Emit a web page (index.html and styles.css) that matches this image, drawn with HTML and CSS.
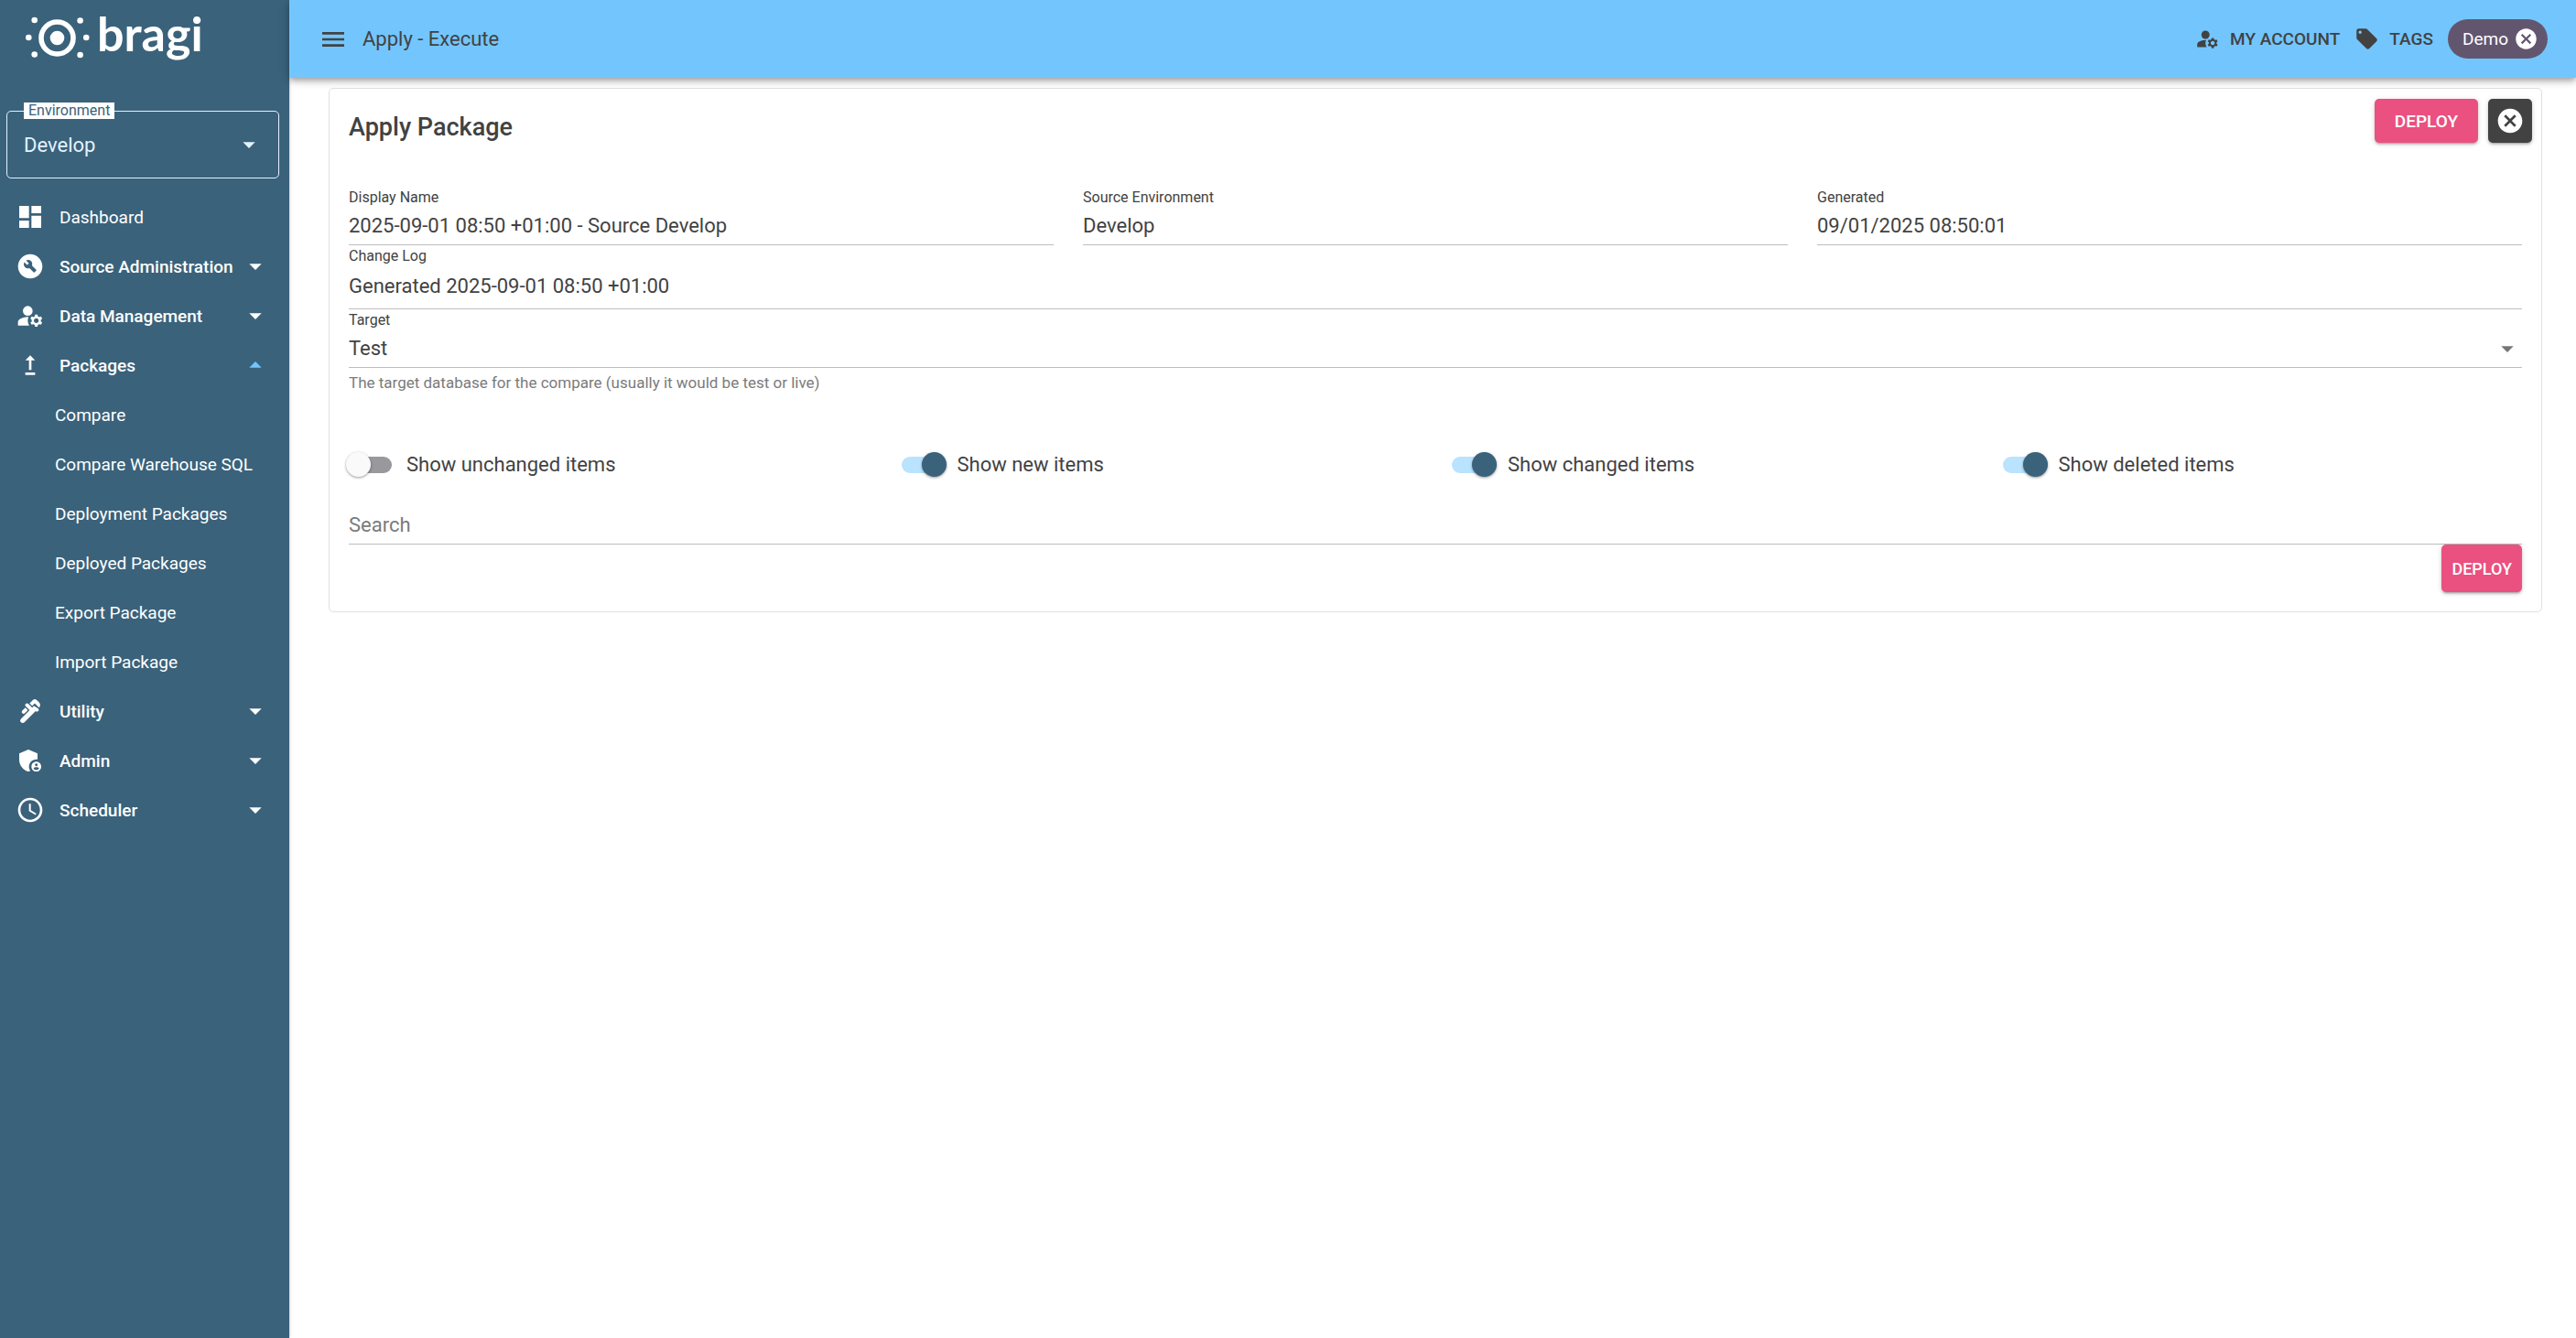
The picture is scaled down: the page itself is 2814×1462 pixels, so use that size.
FILE: index.html
```html
<!DOCTYPE html>
<html lang="en">
<head>
    <meta charset="UTF-8">
    <meta name="viewport" content="width=device-width, initial-scale=1.0">
    <title>Apply - Execute</title>
    <link rel="stylesheet" href="styles.css">
</head>
<body>

<!-- shared icons -->
<svg class="sprite" aria-hidden="true">
    <symbol id="arrow-down" viewBox="0 0 24 24"><path d="M7 10l5 5 5-5z"/></symbol>
    <symbol id="arrow-up" viewBox="0 0 24 24"><path d="M7 14l5-5 5 5z"/></symbol>
    <symbol id="cancel" viewBox="0 0 24 24"><path d="M12 2C6.47 2 2 6.47 2 12s4.47 10 10 10 10-4.47 10-10S17.53 2 12 2zm5 13.59L15.59 17 12 13.41 8.41 17 7 15.59 10.59 12 7 8.41 8.41 7 12 10.59 15.59 7 17 8.41 13.41 12 17 15.59z"/></symbol>
    <symbol id="manage" viewBox="0 0 24 24">
        <circle cx="10" cy="8" r="4"/>
        <path d="M10.67,13.02C10.45,13.01,10.23,13,10,13c-2.42,0-4.68,0.67-6.61,1.82C2.51,15.34,2,16.32,2,17.35V20h9.26C10.47,18.87,10,17.49,10,16C10,14.93,10.25,13.93,10.67,13.02z"/>
        <path d="M20.75,16c0-0.22-0.03-0.42-0.06-0.63l1.14-1.01l-1-1.73l-1.45,0.49c-0.32-0.27-0.68-0.48-1.08-0.63L18,11h-2l-0.3,1.49c-0.4,0.15-0.76,0.36-1.08,0.63l-1.45-0.49l-1,1.73l1.14,1.01c-0.03,0.21-0.06,0.41-0.06,0.63s0.03,0.42,0.06,0.63l-1.14,1.01l1,1.73l1.45-0.49c0.32,0.27,0.68,0.48,1.08,0.63L16,21h2l0.3-1.49c0.4-0.15,0.76-0.36,1.08-0.63l1.45,0.49l1-1.73l-1.14-1.01C20.72,16.42,20.75,16.22,20.75,16z M17,18c-1.1,0-2-0.9-2-2s0.9-2,2-2s2,0.9,2,2S18.1,18,17,18z"/>
    </symbol>
</svg>

<div class="layout">
    <aside class="sidebar">
        <a class="logo" href="#">
            <svg class="logo-mark" viewBox="0 0 70 46" aria-hidden="true">
                <circle cx="34.5" cy="23.5" r="17.5" fill="none" stroke="#fff" stroke-width="5.6"/>
                <circle cx="34.5" cy="23.5" r="7.8"/>
                <circle cx="9.7" cy="4" r="3.3"/>
                <circle cx="59.6" cy="4.5" r="3.3"/>
                <circle cx="3.3" cy="23" r="3.3"/>
                <circle cx="66.2" cy="23" r="3.3"/>
                <circle cx="9.7" cy="41.5" r="3.3"/>
                <circle cx="59.6" cy="42" r="3.3"/>
            </svg>
            <span class="logo-text">bragi</span>
        </a>

        <fieldset class="environment">
            <legend><label for="environment">Environment</label></legend>
            <div class="select">
                <select id="environment">
                    <option>Develop</option>
                </select>
                <svg class="icon"><use href="#arrow-down"/></svg>
            </div>
        </fieldset>

        <nav class="nav">
            <a class="nav-item" href="#">
                <svg class="icon" viewBox="0 0 24 24"><path d="M3 13h8V3H3v10zm0 8h8v-6H3v6zm10 0h8V11h-8v10zm0-18v6h8V3h-8z"/></svg>
                <span>Dashboard</span>
            </a>
            <button class="nav-item nav-group" type="button">
                <svg class="icon" viewBox="0 0 24 24"><path fill-rule="evenodd" d="M12,2C6.48,2,2,6.48,2,12c0,5.52,4.48,10,10,10s10-4.48,10-10C22,6.48,17.52,2,12,2z M16.9,15.49l-1.4,1.4c-0.2,0.2-0.51,0.2-0.71,0l-3.41-3.41c-1.22,0.43-2.64,0.17-3.62-0.81c-1.11-1.11-1.3-2.79-0.59-4.1l2.35,2.35l1.41-1.41L8.58,7.17c1.32-0.71,2.99-0.52,4.1,0.59c0.98,0.98,1.24,2.4,0.81,3.62l3.41,3.41C17.09,14.98,17.09,15.3,16.9,15.49z"/></svg>
                <span>Source Administration</span>
                <svg class="icon"><use href="#arrow-down"/></svg>
            </button>
            <button class="nav-item nav-group" type="button">
                <svg class="icon"><use href="#manage"/></svg>
                <span>Data Management</span>
                <svg class="icon"><use href="#arrow-down"/></svg>
            </button>
            <button class="nav-item nav-group open" type="button" aria-expanded="true">
                <svg class="icon" viewBox="0 0 24 24"><path d="M16,18v2H8v-2H16z M11,7.99V16h2V7.99h3L12,4L8,7.99H11z"/></svg>
                <span>Packages</span>
                <svg class="icon"><use href="#arrow-up"/></svg>
            </button>
            <a class="nav-item nav-sub" href="#">Compare</a>
            <a class="nav-item nav-sub" href="#">Compare Warehouse SQL</a>
            <a class="nav-item nav-sub" href="#">Deployment Packages</a>
            <a class="nav-item nav-sub" href="#">Deployed Packages</a>
            <a class="nav-item nav-sub" href="#">Export Package</a>
            <a class="nav-item nav-sub" href="#">Import Package</a>
            <button class="nav-item nav-group" type="button">
                <svg class="icon" viewBox="0 0 24 24"><path d="M19.28 4.93l-2.12-2.12c-.78-.78-2.05-.78-2.83 0L11.5 5.64l2.12 2.12 2.12-2.12 3.54 3.54c1.17-1.18 1.17-3.08 0-4.25zM5.49 13.77c.59.59 1.54.59 2.12 0l2.47-2.47-2.12-2.13-2.47 2.47c-.59.59-.59 1.54 0 2.13z"/><path d="M15.04 7.76l-.71.71-.71.71L10.44 6c-.59-.6-1.54-.6-2.12-.01-.59.59-.59 1.54 0 2.12l3.18 3.18-.71.71-6.36 6.36c-.78.78-.78 2.05 0 2.83.78.78 2.05.78 2.83 0L16.45 12c.59.59 1.54.59 2.12 0 .59-.59.59-1.54 0-2.12l-3.53-2.12z"/></svg>
                <span>Utility</span>
                <svg class="icon"><use href="#arrow-down"/></svg>
            </button>
            <button class="nav-item nav-group" type="button">
                <svg class="icon" viewBox="0 0 24 24"><path d="M17,11c0.34,0,0.67,0.04,1,0.09V6.27L10.5,3L3,6.27v4.91c0,4.54,3.2,8.79,7.5,9.82c0.55-0.13,1.08-0.32,1.6-0.55C11.41,19.47,11,18.28,11,17C11,13.69,13.69,11,17,11z"/><path d="M17,13c-2.21,0-4,1.79-4,4c0,2.21,1.79,4,4,4s4-1.79,4-4C21,14.79,19.21,13,17,13z M17,14.38c0.62,0,1.12,0.51,1.12,1.12s-0.51,1.12-1.12,1.12s-1.12-0.51-1.12-1.12S16.38,14.38,17,14.38z M17,19.75c-0.93,0-1.74-0.46-2.24-1.17c0.05-0.72,1.51-1.08,2.24-1.08s2.19,0.36,2.24,1.08C18.74,19.29,17.93,19.75,17,19.75z" fill-rule="evenodd"/></svg>
                <span>Admin</span>
                <svg class="icon"><use href="#arrow-down"/></svg>
            </button>
            <button class="nav-item nav-group" type="button">
                <svg class="icon" viewBox="0 0 24 24"><path d="M11.99 2C6.47 2 2 6.48 2 12s4.47 10 9.99 10C17.52 22 22 17.52 22 12S17.52 2 11.99 2zM12 20c-4.42 0-8-3.58-8-8s3.58-8 8-8 8 3.58 8 8-3.58 8-8 8z"/><path d="M12.5 7H11v6l5.25 3.15.75-1.23-4.5-2.67z"/></svg>
                <span>Scheduler</span>
                <svg class="icon"><use href="#arrow-down"/></svg>
            </button>
        </nav>
    </aside>

    <div class="page">
        <header class="appbar">
            <button class="menu-btn" type="button" aria-label="Menu">
                <svg class="icon" viewBox="0 0 24 24"><path d="M3 18h18v-2H3v2zm0-5h18v-2H3v2zm0-7v2h18V6H3z"/></svg>
            </button>
            <span class="appbar-title">Apply - Execute</span>
            <div class="appbar-actions">
                <a class="appbar-link" href="#"><svg class="icon icon-small"><use href="#manage"/></svg>MY ACCOUNT</a>
                <a class="appbar-link" href="#"><svg class="icon icon-small" viewBox="0 0 24 24"><path d="M21.41 11.58l-9-9C12.05 2.22 11.55 2 11 2H4c-1.1 0-2 .9-2 2v7c0 .55.22 1.05.59 1.42l9 9c.36.36.86.58 1.41.58.55 0 1.05-.22 1.41-.59l7-7c.37-.36.59-.86.59-1.41 0-.55-.23-1.06-.59-1.42zM5.5 7C4.67 7 4 6.33 4 5.5S4.67 4 5.5 4 7 4.67 7 5.5 6.33 7 5.5 7z"/></svg>TAGS</a>
                <div class="chip">
                    <span>Demo</span>
                    <button type="button" aria-label="Remove Demo"><svg class="icon icon-small"><use href="#cancel"/></svg></button>
                </div>
            </div>
        </header>

        <main class="content">
            <section class="card">
                <div class="card-header">
                    <h1>Apply Package</h1>
                    <button class="btn btn-wide" type="button">DEPLOY</button>
                    <button class="btn btn-close" type="button" aria-label="Close"><svg class="icon"><use href="#cancel"/></svg></button>
                </div>

                <form class="card-body">
                    <div class="row row-3">
                        <div class="field">
                            <label for="displayName">Display Name</label>
                            <input class="input" type="text" id="displayName" value="2025-09-01 08:50 +01:00 - Source Develop">
                        </div>
                        <div class="field">
                            <label for="sourceEnvironment">Source Environment</label>
                            <input class="input" type="text" id="sourceEnvironment" value="Develop" readonly>
                        </div>
                        <div class="field">
                            <label for="generated">Generated</label>
                            <input class="input" type="text" id="generated" value="09/01/2025 08:50:01" readonly>
                        </div>
                    </div>
                    <div class="field">
                        <label for="changeLog">Change Log</label>
                        <textarea class="input" id="changeLog" rows="1">Generated 2025-09-01 08:50 +01:00</textarea>
                    </div>
                    <div class="field">
                        <label for="target">Target</label>
                        <div class="select">
                            <select class="input" id="target" aria-describedby="targetHelp">
                                <option>Test</option>
                            </select>
                            <svg class="icon"><use href="#arrow-down"/></svg>
                        </div>
                        <p class="help" id="targetHelp">The target database for the compare (usually it would be test or live)</p>
                    </div>

                    <div class="row row-4">
                        <label class="switch"><input type="checkbox">Show unchanged items</label>
                        <label class="switch"><input type="checkbox" checked>Show new items</label>
                        <label class="switch"><input type="checkbox" checked>Show changed items</label>
                        <label class="switch"><input type="checkbox" checked>Show deleted items</label>
                    </div>

                    <input class="input" type="text" placeholder="Search" aria-label="Search">
                    <button class="btn btn-bottom" type="button">DEPLOY</button>
                </form>
            </section>
        </main>
    </div>
</div>

</body>
</html>
```

FILE: styles.css
```css
* {
    box-sizing: border-box;
}
body {
    margin: 0;
    font-family: Roboto, "Liberation Sans", sans-serif;
    font-size: 22px;
    color: #424242;
    background-color: #fff;
}
button, input, select, textarea {
    font: inherit;
    color: inherit;
    border: none;
    border-radius: 0;
    background: none;
    margin: 0;
    padding: 0;
}
button {
    cursor: pointer;
}
a {
    color: inherit;
    text-decoration: none;
}
.sprite {
    display: none;
}
.icon {
    display: block;
    width: 32px;
    height: 32px;
    flex: none;
    fill: currentColor;
}
.icon-small {
    width: 27px;
    height: 27px;
}
.layout {
    display: grid;
    grid-template-columns: 316px 1fr;
    min-height: 100vh;
}

/* sidebar */
.sidebar {
    background-color: #3a627b;
    color: #fff;
    box-shadow: 0 0 3px rgba(0, 0, 0, 0.3);
}
.logo {
    display: flex;
    align-items: flex-start;
    gap: 8px;
    height: 112px;
    padding: 18px 0 0 28px;
}
.logo-mark {
    width: 70px;
    height: 46px;
    fill: #fff;
}
.logo-text {
    font-family: Lato, sans-serif;
    font-size: 52px;
    font-weight: bold;
    line-height: 36px;
}
.environment {
    margin: 0 11px 15px 7px;
    padding: 0 16px 8px 18px;
    border: 1px solid #e3f2fd;
    border-radius: 5px;
    color: #e3f2fd;
}
.environment legend {
    padding: 0 5px;
    background-color: #fff;
    color: #3a627b;
    font-size: 16px;
    line-height: 18px;
}
.select {
    display: grid;
    align-items: center;
}
.select select,
.select .icon {
    grid-area: 1 / 1;
}
.select select {
    appearance: none;
    width: 100%;
    height: 56px;
}
.select .icon {
    justify-self: end;
    pointer-events: none;
}
.nav-item {
    display: flex;
    align-items: center;
    gap: 16px;
    width: 100%;
    height: 54px;
    padding: 0 21px 0 17px;
    font-size: 19px;
    text-align: left;
}
.nav-item span {
    flex: 1;
    min-width: 0;
    white-space: nowrap;
}
.nav-group {
    font-weight: 500;
}
.nav-group .icon:last-child {
    margin-left: -16px;
}
.nav-group.open .icon:last-child {
    color: #73c6fd;
}
.nav-sub {
    padding-left: 60px;
}

/* top bar */
.appbar {
    position: relative;
    display: flex;
    align-items: center;
    gap: 16px;
    height: 85px;
    padding: 0 31px 0 32px;
    background-color: #73c6fd;
    box-shadow: 0 3px 5px -1px rgba(0, 0, 0, 0.2), 0 5px 7px rgba(0, 0, 0, 0.14), 0 1px 13px rgba(0, 0, 0, 0.12);
}
.appbar-actions {
    display: flex;
    align-items: center;
    gap: 16px;
    margin-left: auto;
}
.appbar-link {
    display: flex;
    align-items: center;
    gap: 11px;
    font-size: 19px;
    font-weight: 500;
}
.chip {
    display: flex;
    align-items: center;
    gap: 6px;
    height: 43px;
    padding: 0 10px 0 16px;
    border-radius: 22px;
    background-color: #62566f;
    color: #fff;
    font-size: 19px;
}

/* package card */
.content {
    padding: 11px 37px 40px 43px;
}
.card {
    border: 1px solid #e0e0e0;
    border-radius: 5px;
}
.card-header {
    display: flex;
    gap: 11px;
    padding: 11px 10px 0 21px;
}
.card-header h1 {
    flex: 1;
    align-self: flex-end;
    margin: 0;
    font-size: 27px;
    font-weight: 500;
    line-height: 34px;
}
.btn {
    height: 48px;
    border-radius: 5px;
    background-color: #ea5080;
    color: #fff;
    font-size: 19px;
    font-weight: 500;
    box-shadow: 0 3px 2px -2px rgba(0, 0, 0, 0.2), 0 2px 3px rgba(0, 0, 0, 0.14), 0 1px 6px rgba(0, 0, 0, 0.12);
}
.btn-wide {
    padding: 0 22px;
}
.btn-close {
    padding: 0 8px;
    background-color: #424242;
}
.card-body {
    display: flex;
    flex-direction: column;
    padding: 48px 21px 21px;
}
.row {
    display: grid;
    column-gap: 32px;
}
.row-3 {
    grid-template-columns: repeat(3, 1fr);
}
.row-4 {
    grid-template-columns: repeat(4, 1fr);
    margin: 52px 0 18px;
}
.field {
    padding-top: 2px;
}
.field label {
    display: block;
    font-size: 16px;
    line-height: 19px;
}
.input,
.select .input {
    display: block;
    width: 100%;
    height: 43px;
    border-bottom: 1px solid #bdbdbd;
    outline: none;
}
.input::placeholder {
    color: #7b7b7b;
    opacity: 1;
}
textarea.input {
    height: 49px;
    padding-top: 10px;
    line-height: 28px;
    resize: none;
    overflow: hidden;
}
.field .select .icon {
    color: #757575;
}
.help {
    margin: 6px 0 0;
    color: #7b7b7b;
    font-size: 17px;
    line-height: 21px;
}
.switch {
    display: flex;
    align-items: center;
    gap: 16px;
    height: 53px;
}
/* track is the checkbox itself, thumb is its ::before */
.switch input {
    appearance: none;
    position: relative;
    width: 45px;
    height: 18px;
    margin-left: 2px;
    border-radius: 9px;
    background-color: #98989d;
}
.switch input::before {
    content: "";
    position: absolute;
    top: -5px;
    left: -5px;
    width: 27px;
    height: 27px;
    border-radius: 50%;
    background-color: #fafafa;
    box-shadow: 0 1px 3px rgba(0, 0, 0, 0.4);
}
.switch input:checked {
    background-color: #b9e3fe;
}
.switch input:checked::before {
    left: 22px;
    background-color: #3a627b;
}
.btn-bottom {
    align-self: flex-end;
    height: 52px;
    padding: 0 11px;
    font-size: 18px;
}
```
